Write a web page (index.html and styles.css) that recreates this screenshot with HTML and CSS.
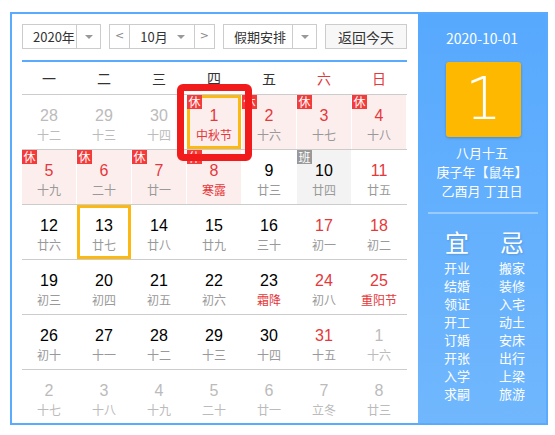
FILE: index.html
```html
<!DOCTYPE html>
<html lang="zh">
<head>
<meta charset="utf-8">
<title>万年历</title>
<link rel="stylesheet" href="styles.css">
</head>
<body>
<div class="cal">
  <div class="main">
    <div class="toolbar">
      <div class="sel year"><span class="val">2020年</span><span class="arr"><i></i></span></div>
      <div class="month-group">
        <span class="nav prev">&lt;</span>
        <div class="month"><span class="val">10月</span><span class="arr noline"><i></i></span></div>
        <span class="nav next">&gt;</span>
      </div>
      <div class="sel holiday"><span class="val">假期安排</span><span class="arr"><i></i></span></div>
      <div class="today">返回今天</div>
    </div>
    <div class="week-head">
      <span>一</span><span>二</span><span>三</span><span>四</span><span>五</span><span class="red">六</span><span class="red">日</span>
    </div>
    <div class="rows">
      <div class="row">
        <div class="c other"><span class="n">28</span><span class="l">十二</span></div>
        <div class="c other"><span class="n">29</span><span class="l">十三</span></div>
        <div class="c other"><span class="n">30</span><span class="l">十四</span></div>
        <div class="c hol sel-day"><span class="n red">1</span><span class="l red">中秋节</span><span class="badge">休</span></div>
        <div class="c hol"><span class="n red">2</span><span class="l">十六</span><span class="badge">休</span></div>
        <div class="c hol"><span class="n red">3</span><span class="l">十七</span><span class="badge">休</span></div>
        <div class="c hol"><span class="n red">4</span><span class="l">十八</span><span class="badge">休</span></div>
      </div>
      <div class="row">
        <div class="c hol"><span class="n red">5</span><span class="l">十九</span><span class="badge">休</span></div>
        <div class="c hol"><span class="n red">6</span><span class="l">二十</span><span class="badge">休</span></div>
        <div class="c hol"><span class="n red">7</span><span class="l">廿一</span><span class="badge">休</span></div>
        <div class="c hol"><span class="n red">8</span><span class="l red">寒露</span><span class="badge">休</span></div>
        <div class="c"><span class="n">9</span><span class="l">廿三</span></div>
        <div class="c work"><span class="n">10</span><span class="l">廿四</span><span class="badge ban">班</span></div>
        <div class="c"><span class="n red">11</span><span class="l">廿五</span></div>
      </div>
      <div class="row">
        <div class="c"><span class="n">12</span><span class="l">廿六</span></div>
        <div class="c sel-day"><span class="n">13</span><span class="l">廿七</span></div>
        <div class="c"><span class="n">14</span><span class="l">廿八</span></div>
        <div class="c"><span class="n">15</span><span class="l">廿九</span></div>
        <div class="c"><span class="n">16</span><span class="l">三十</span></div>
        <div class="c"><span class="n red">17</span><span class="l">初一</span></div>
        <div class="c"><span class="n red">18</span><span class="l">初二</span></div>
      </div>
      <div class="row">
        <div class="c"><span class="n">19</span><span class="l">初三</span></div>
        <div class="c"><span class="n">20</span><span class="l">初四</span></div>
        <div class="c"><span class="n">21</span><span class="l">初五</span></div>
        <div class="c"><span class="n">22</span><span class="l">初六</span></div>
        <div class="c"><span class="n">23</span><span class="l red">霜降</span></div>
        <div class="c"><span class="n red">24</span><span class="l">初八</span></div>
        <div class="c"><span class="n red">25</span><span class="l red">重阳节</span></div>
      </div>
      <div class="row">
        <div class="c"><span class="n">26</span><span class="l">初十</span></div>
        <div class="c"><span class="n">27</span><span class="l">十一</span></div>
        <div class="c"><span class="n">28</span><span class="l">十二</span></div>
        <div class="c"><span class="n">29</span><span class="l">十三</span></div>
        <div class="c"><span class="n">30</span><span class="l">十四</span></div>
        <div class="c"><span class="n red">31</span><span class="l">十五</span></div>
        <div class="c other"><span class="n">1</span><span class="l">十六</span></div>
      </div>
      <div class="row last">
        <div class="c other"><span class="n">2</span><span class="l">十七</span></div>
        <div class="c other"><span class="n">3</span><span class="l">十八</span></div>
        <div class="c other"><span class="n">4</span><span class="l">十九</span></div>
        <div class="c other"><span class="n">5</span><span class="l">二十</span></div>
        <div class="c other"><span class="n">6</span><span class="l">廿一</span></div>
        <div class="c other"><span class="n">7</span><span class="l">立冬</span></div>
        <div class="c other"><span class="n">8</span><span class="l">廿三</span></div>
      </div>
    </div>
  </div>
  <div class="side">
    <div class="date">2020-10-01</div>
    <div class="big">1</div>
    <div class="lunar">
      <div>八月十五</div>
      <div>庚子年【鼠年】</div>
      <div>乙酉月 丁丑日</div>
    </div>
    <div class="sep"></div>
    <div class="yiji">
      <div class="col">
        <div class="yj-title">宜</div>
        <div>开业</div><div>结婚</div><div>领证</div><div>开工</div><div>订婚</div><div>开张</div><div>入学</div><div>求嗣</div>
      </div>
      <div class="col">
        <div class="yj-title">忌</div>
        <div>搬家</div><div>装修</div><div>入宅</div><div>动土</div><div>安床</div><div>出行</div><div>上梁</div><div>旅游</div>
      </div>
    </div>
  </div>
  <div class="mark"></div>
</div>
</body>
</html>
```

FILE: styles.css
```css
* { box-sizing: border-box; }
body {
  margin: 0;
  background: #fff;
  font-family: "Noto Sans CJK SC", "Liberation Sans", sans-serif;
  color: #333;
}
.cal {
  position: relative;
  display: flex;
  margin: 12px 0 0 10px;
  width: 538px;
  height: 413px;
  border: 2px solid #5aabfe;
  overflow: hidden;
}
.main {
  width: 406px;
  padding: 10px 11px 0 10px;
}
.toolbar {
  display: flex;
  gap: 8px;
  height: 25px;
  font-size: 13px;
}
.sel, .month-group, .today {
  height: 25px;
  border: 1px solid #ccc;
  display: flex;
  align-items: center;
  background: #fff;
}
.val {
  flex: 1;
  padding-left: 10px;
  line-height: 23px;
  white-space: nowrap;
  color: #333;
}
.arr {
  width: 24px;
  height: 100%;
  border-left: 1px solid #ccc;
  display: flex;
  align-items: center;
  justify-content: center;
}
.arr.noline { border-left: none; width: 26px; }
.arr i {
  width: 0;
  height: 0;
  border-left: 4px solid transparent;
  border-right: 4px solid transparent;
  border-top: 4px solid #999;
}
.year { width: 79px; }
.month-group { width: 106px; }
.nav {
  width: 21px;
  height: 100%;
  text-align: center;
  line-height: 22px;
  color: #888;
  font-size: 11px;
  font-family: "DejaVu Sans", sans-serif;
}
.prev { border-right: 1px solid #ccc; }
.next { border-left: 1px solid #ccc; }
.month { flex: 1; display: flex; align-items: center; height: 100%; }
.holiday { width: 94px; }
.today {
  width: 82px;
  justify-content: center;
  background: #f7f7f7;
  font-size: 14px;
  color: #333;
}
.week-head {
  margin-top: 11px;
  border-top: 2px solid #5aabfe;
  border-bottom: 1px solid #ccc;
  height: 35px;
  display: grid;
  grid-template-columns: repeat(7, 54px);
  column-gap: 1px;
  align-items: center;
  font-size: 14px;
  color: #333;
}
.week-head span { text-align: center; line-height: 30px; }
.red { color: #e5383b; }
.row {
  display: grid;
  grid-template-columns: repeat(7, 54px);
  column-gap: 1px;
  height: 55px;
  border-bottom: 1px solid #ccc;
}
.row.last { border-bottom: none; }
.c {
  position: relative;
  text-align: center;
  height: 54px;
}
.n {
  display: block;
  padding-top: 11px;
  font-family: "Liberation Sans", Arial, sans-serif;
  font-size: 16px;
  line-height: 20px;
  color: #000;
}
.n.red { color: #e5383b; }
.l {
  display: block;
  font-size: 12px;
  line-height: 17px;
  color: #999;
}
.l.red { color: #e5383b; }
.other .n, .other .l { color: #bbb; }
.hol { background: #fdeeee; }
.work { background: #f3f3f3; }
.sel-day { box-shadow: inset 0 0 0 3px #fcb813; }
.badge {
  position: absolute;
  left: 0;
  top: 0;
  width: 15px;
  height: 14px;
  font-size: 12px;
  line-height: 14px;
  color: #fff;
  background: #f43b3b;
  text-align: center;
}
.badge.ban { background: #999; }
.side {
  width: 128px;
  background: linear-gradient(#57a9fe, #70b7fd);
  color: #fff;
  padding-top: 14px;
}
.date {
  text-align: center;
  font-size: 14px;
  line-height: 20px;
}
.big {
  width: 75px;
  height: 75px;
  margin: 14px 0 0 28px;
  background: #ffb800;
  border-radius: 3px;
  box-shadow: 0 1px 3px rgba(0, 0, 0, 0.2);
  text-align: center;
  font-family: "DejaVu Sans", sans-serif;
  font-weight: 200;
  font-size: 58px;
  line-height: 75px;
  color: #fff;
}
.lunar {
  margin-top: 6px;
  text-align: center;
  font-size: 13px;
  line-height: 19px;
}
.sep {
  width: 110px;
  height: 2px;
  margin: 12px 0 0 10px;
  background: rgba(255, 255, 255, 0.35);
}
.yiji {
  display: flex;
  gap: 15px;
  margin: 13px 0 0 19px;
}
.col {
  width: 40px;
  text-align: center;
  font-size: 13px;
  line-height: 18px;
}
.yj-title {
  font-size: 24px;
  line-height: 30px;
  margin-bottom: 2px;
  text-shadow: 1px 1px 2px rgba(0, 0, 0, 0.15);
}
.mark {
  position: absolute;
  left: 165px;
  top: 70px;
  width: 75px;
  height: 77px;
  border: 7px solid #f21b1b;
  border-radius: 6px;
}
```
